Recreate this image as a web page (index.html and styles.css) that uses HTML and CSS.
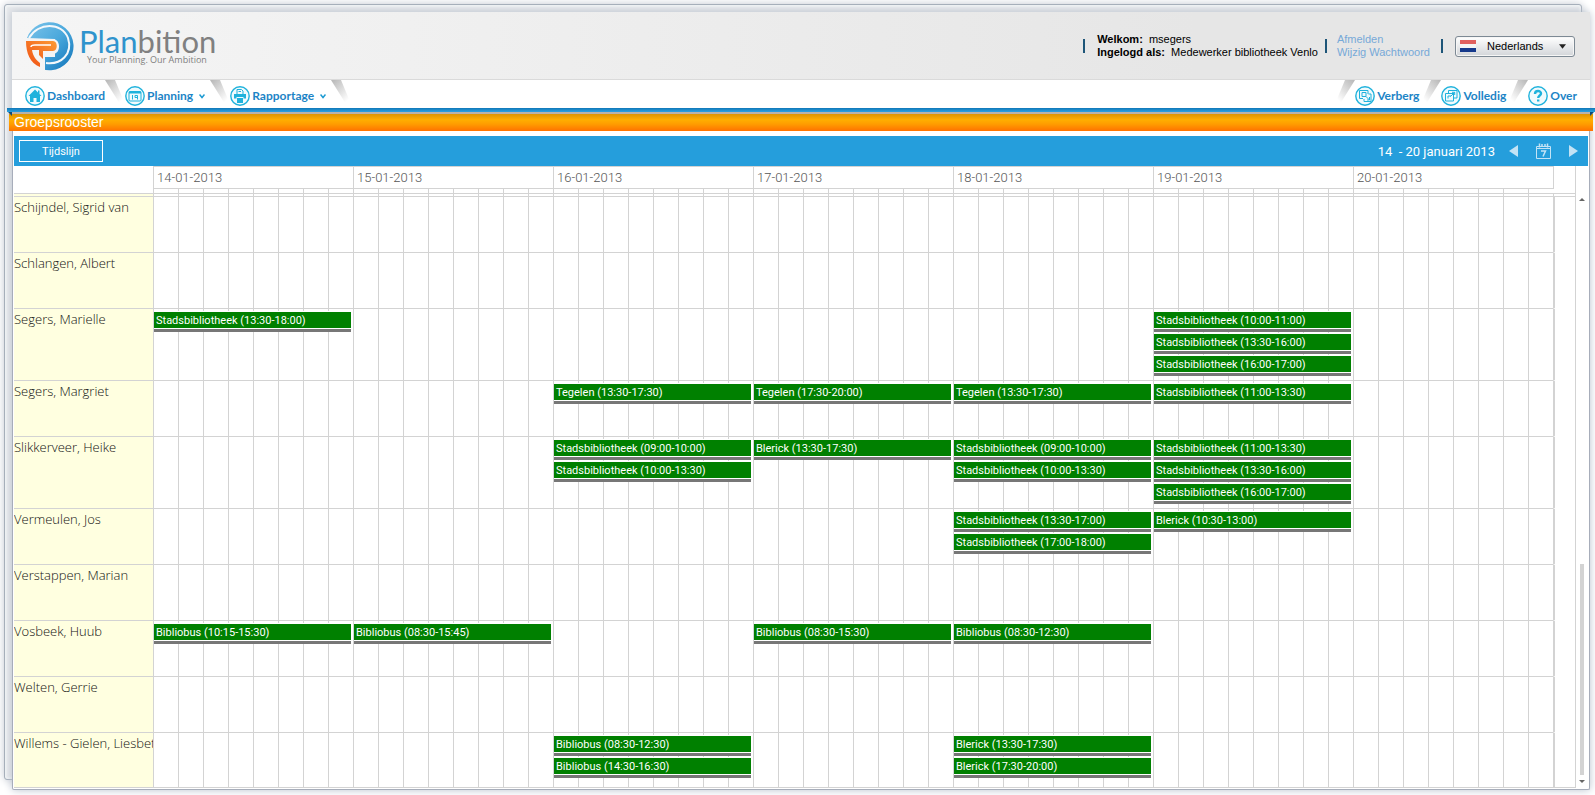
FILE: index.html
```html
<!DOCTYPE html>
<html lang="nl">
<head>
<meta charset="utf-8">
<title>Planbition - Groepsrooster</title>
<link rel="stylesheet" href="styles.css">
</head>
<body>
<div class="sheet">
  <header class="header">
    <div class="logo">
      <svg class="logo-mark" viewBox="0 0 50 50" aria-hidden="true">
        <defs>
          <linearGradient id="lb" x1="0" y1="0" x2="1" y2="1"><stop offset="0" stop-color="#7cc4ea"/><stop offset=".5" stop-color="#4aa8dc"/><stop offset="1" stop-color="#0f72b8"/></linearGradient>
          <linearGradient id="lo" x1="0" y1="1" x2="1" y2="0"><stop offset="0" stop-color="#f04f14"/><stop offset="1" stop-color="#fb9a34"/></linearGradient>
        </defs>
        <path d="M2 17 A24 24 0 1 1 17 48 V36 H30 V18 Z" fill="url(#lb)"/>
        <path d="M4 17 C13 1 37 1 43 17 C48 33 36 44 21 42" fill="none" stroke="#f4f8fb" stroke-width="2"/>
        <path d="M0 18 H28 C36 18 36 33 28 33 H20 V49 H17 V22 H0Z" fill="#f4f4f4"/>
        <path d="M1 20 H28 C33 20 33 30 28 30 H18 V38 L14 34 V29 H7 C8 35 11 39 15 42 V46 C5 42 1 32 1 20 Z" fill="url(#lo)"/>
        <path d="M6 26 C6 24 8 24 10 24 H26" fill="none" stroke="#fff" stroke-width="1.500"/>
      </svg>
      <div class="logo-words">
        <div class="logo-name"><span class="logo-blue">Plan</span>bition</div>
        <div class="logo-tag">Your Planning. Our Ambition</div>
      </div>
    </div>
    <div class="user">
      <i class="bar"></i>
      <div class="who"><div><b>Welkom:</b>&nbsp; msegers</div><div><b>Ingelogd als:</b>&nbsp; Medewerker bibliotheek Venlo</div></div>
      <i class="bar"></i>
      <div class="links"><a href="#">Afmelden</a><a href="#">Wijzig Wachtwoord</a></div>
      <i class="bar"></i>
      <div class="lang">
        <select aria-label="Taal"><option>Nederlands</option></select>
        <svg class="flag" viewBox="0 0 16 12" aria-hidden="true"><path d="M0 0h16v4H0z" fill="#e0605f"/><path d="M0 4h16v4H0z" fill="#f4f4f4"/><path d="M0 8h16v4H0z" fill="#15398b"/></svg>
        <svg class="caret" viewBox="0 0 8 5" aria-hidden="true"><path d="M0 0h8L4 5z" fill="#222"/></svg>
      </div>
    </div>
  </header>

  <nav class="nav">
    <svg width="0" height="0" class="defs" aria-hidden="true"><defs><linearGradient id="sh" gradientUnits="userSpaceOnUse" x1="1" y1="0" x2="19" y2="18"><stop offset="0" stop-color="#b8b8b8"/><stop offset="1" stop-color="#fff"/></linearGradient></defs></svg>
    <div class="tabs">
      <a class="tab" href="#">
        <svg class="icon" viewBox="0 0 20 20"><circle cx="10" cy="10" r="9.200"/><path class="fill" d="M10 3.500 3.500 10H5v6h3.500v-4h3v4H15v-6h1.500L14.500 8V4.500H13v2z"/></svg>Dashboard</a>
      <svg class="edge" viewBox="0 0 20 25"><path d="M0 0H10L20 24H15Z" fill="url(#sh)"/></svg>
      <a class="tab" href="#">
        <svg class="icon" viewBox="0 0 20 20"><circle cx="10" cy="10" r="9.200"/><rect x="4" y="5.500" width="12" height="9.500" rx="1"/><path d="M4 6.500h12" stroke-width="2"/><path d="M7.500 9v4.500M12.500 13.500v-4H10v2h2.500"/></svg>Planning<svg class="chev" viewBox="0 0 6 5"><path d="M.5 .5 3 3.500 5.500 .5"/></svg></a>
      <svg class="edge" viewBox="0 0 20 25"><path d="M0 0H10L20 24H15Z" fill="url(#sh)"/></svg>
      <a class="tab" href="#">
        <svg class="icon" viewBox="0 0 20 20"><circle cx="10" cy="10" r="9.200"/><path d="M7 8V3.500h4.500L13 5v3M8.500 5.500h2.500"/><path class="fill" d="M4 8h12v4.500h-2.500v-1.500h-7v1.500H4z"/><path class="fill" d="M7 12h6v5H7z"/></svg>Rapportage<svg class="chev" viewBox="0 0 6 5"><path d="M.5 .5 3 3.500 5.500 .5"/></svg></a>
      <svg class="edge" viewBox="0 0 20 25"><path d="M0 0H10L20 24H15Z" fill="url(#sh)"/></svg>
    </div>
    <div class="tabs tabs-right">
      <svg class="edge flip" viewBox="0 0 20 25"><path d="M0 0H10L20 24H15Z" fill="url(#sh)"/></svg>
      <a class="tab" href="#">
        <svg class="icon" viewBox="0 0 20 20"><circle cx="10" cy="10" r="9.200"/><path d="M8 12.500H4.500v-8h8.500V8M7 6.500h4v4H7zM11 10.500l3.500 3.500M14.500 11v3H12M13.500 8H16v7.500H9V13"/></svg>Verberg</a>
      <svg class="edge flip" viewBox="0 0 20 25"><path d="M0 0H10L20 24H15Z" fill="url(#sh)"/></svg>
      <a class="tab" href="#">
        <svg class="icon" viewBox="0 0 20 20"><circle cx="10" cy="10" r="9.200"/><path d="M7.500 7V4.500H16V12h-3M4.500 7.500h8V15h-8zM7 12.500V10h3M9.500 10.500l4-4M11 6.300h2.700V9"/></svg>Volledig</a>
      <svg class="edge flip" viewBox="0 0 20 25"><path d="M0 0H10L20 24H15Z" fill="url(#sh)"/></svg>
      <a class="tab" href="#">
        <svg class="icon" viewBox="0 0 20 20"><circle cx="10" cy="10" r="9.200"/><path class="q" d="M7 8C7 4 13 4.200 13 7.500 13 9.500 10.200 9.500 10.200 12M10.200 13.500v2"/></svg>Over</a>
    </div>
  </nav>
  <div class="ribbon"></div>
  <h1 class="title">Groepsrooster</h1>

  <main class="main">
    <div class="toolbar">
      <button class="timeline" type="button">Tijdslijn</button>
      <div class="period">
        <span class="range">14 &nbsp;- 20 januari 2013</span>
        <button type="button" aria-label="Vorige week"><svg width="9" height="12" viewBox="0 0 9 12"><path d="M9 0v12L0 6z" fill="#c3e3f5"/></svg></button>
        <button type="button" aria-label="Kalender"><svg width="15" height="16" viewBox="0 0 15 16" fill="none" stroke="#c3e3f5"><path d="M.5 3.500h14v12H.5zM.5 5.500h14" /><path d="M3.500 .5v4M6 1v3M9 1v3M11.500 .5v4M5 8h4.500L7 13.500" stroke-width="1.500"/></svg></button>
        <button type="button" aria-label="Volgende week"><svg width="9" height="12" viewBox="0 0 9 12"><path d="M0 0v12l9-6z" fill="#c3e3f5"/></svg></button>
      </div>
    </div>
    <div class="board">
      <table class="roster">
        <colgroup><col class="c-name"><col><col><col><col><col><col><col><col class="c-end"></colgroup>
        <thead>
          <tr class="dates"><td></td><th scope="col">14-01-2013</th><th scope="col">15-01-2013</th><th scope="col">16-01-2013</th><th scope="col">17-01-2013</th><th scope="col">18-01-2013</th><th scope="col">19-01-2013</th><th scope="col">20-01-2013</th><td class="end"></td></tr>
          <tr class="ticks"><td></td><td class="d"></td><td class="d"></td><td class="d"></td><td class="d"></td><td class="d"></td><td class="d"></td><td class="d"></td><td></td></tr>
          <tr class="gap"><td class="n"></td><td class="d"></td><td class="d"></td><td class="d"></td><td class="d"></td><td class="d"></td><td class="d"></td><td class="d"></td><td class="end"></td></tr>
        </thead>
        <tbody>
          <tr><th scope="row">Schijndel, Sigrid van</th><td class="d"></td><td class="d"></td><td class="d"></td><td class="d"></td><td class="d"></td><td class="d"></td><td class="d"></td><td class="end"></td></tr>
          <tr><th scope="row">Schlangen, Albert</th><td class="d"></td><td class="d"></td><td class="d"></td><td class="d"></td><td class="d"></td><td class="d"></td><td class="d"></td><td class="end"></td></tr>
          <tr><th scope="row">Segers, Marielle</th><td class="d"><div class="ev">Stadsbibliotheek (13:30-18:00)</div></td><td class="d"></td><td class="d"></td><td class="d"></td><td class="d"></td><td class="d"><div class="ev">Stadsbibliotheek (10:00-11:00)</div><div class="ev">Stadsbibliotheek (13:30-16:00)</div><div class="ev">Stadsbibliotheek (16:00-17:00)</div></td><td class="d"></td><td class="end"></td></tr>
          <tr><th scope="row">Segers, Margriet</th><td class="d"></td><td class="d"></td><td class="d"><div class="ev">Tegelen (13:30-17:30)</div></td><td class="d"><div class="ev">Tegelen (17:30-20:00)</div></td><td class="d"><div class="ev">Tegelen (13:30-17:30)</div></td><td class="d"><div class="ev">Stadsbibliotheek (11:00-13:30)</div></td><td class="d"></td><td class="end"></td></tr>
          <tr><th scope="row">Slikkerveer, Heike</th><td class="d"></td><td class="d"></td><td class="d"><div class="ev">Stadsbibliotheek (09:00-10:00)</div><div class="ev">Stadsbibliotheek (10:00-13:30)</div></td><td class="d"><div class="ev">Blerick (13:30-17:30)</div></td><td class="d"><div class="ev">Stadsbibliotheek (09:00-10:00)</div><div class="ev">Stadsbibliotheek (10:00-13:30)</div></td><td class="d"><div class="ev">Stadsbibliotheek (11:00-13:30)</div><div class="ev">Stadsbibliotheek (13:30-16:00)</div><div class="ev">Stadsbibliotheek (16:00-17:00)</div></td><td class="d"></td><td class="end"></td></tr>
          <tr><th scope="row">Vermeulen, Jos</th><td class="d"></td><td class="d"></td><td class="d"></td><td class="d"></td><td class="d"><div class="ev">Stadsbibliotheek (13:30-17:00)</div><div class="ev">Stadsbibliotheek (17:00-18:00)</div></td><td class="d"><div class="ev">Blerick (10:30-13:00)</div></td><td class="d"></td><td class="end"></td></tr>
          <tr><th scope="row">Verstappen, Marian</th><td class="d"></td><td class="d"></td><td class="d"></td><td class="d"></td><td class="d"></td><td class="d"></td><td class="d"></td><td class="end"></td></tr>
          <tr><th scope="row">Vosbeek, Huub</th><td class="d"><div class="ev">Bibliobus (10:15-15:30)</div></td><td class="d"><div class="ev">Bibliobus (08:30-15:45)</div></td><td class="d"></td><td class="d"><div class="ev">Bibliobus (08:30-15:30)</div></td><td class="d"><div class="ev">Bibliobus (08:30-12:30)</div></td><td class="d"></td><td class="d"></td><td class="end"></td></tr>
          <tr><th scope="row">Welten, Gerrie</th><td class="d"></td><td class="d"></td><td class="d"></td><td class="d"></td><td class="d"></td><td class="d"></td><td class="d"></td><td class="end"></td></tr>
          <tr class="last"><th scope="row">Willems - Gielen, Liesbeth</th><td class="d"></td><td class="d"></td><td class="d"><div class="ev">Bibliobus (08:30-12:30)</div><div class="ev">Bibliobus (14:30-16:30)</div></td><td class="d"></td><td class="d"><div class="ev">Blerick (13:30-17:30)</div><div class="ev">Blerick (17:30-20:00)</div></td><td class="d"></td><td class="d"></td><td class="end"></td></tr>
        </tbody>
      </table>
      <div class="scroll" aria-hidden="true">
        <svg width="6" height="3" viewBox="0 0 6 3"><path d="M3 0 6 3H0z" fill="#666"/></svg>
        <div class="track"><div class="thumb"></div></div>
        <svg width="6" height="3" viewBox="0 0 6 3"><path d="M3 3 6 0H0z" fill="#666"/></svg>
      </div>
    </div>
  </main>
</div>
</body>
</html>
```

FILE: styles.css
```css
* { box-sizing: border-box; }
body { margin: 0; background: #fff; font-family: "Liberation Sans", Arial, sans-serif; font-size: 11px; color: #000; overflow: hidden; }
a { text-decoration: none; }
button { font: inherit; color: inherit; background: none; border: 0; padding: 0; display: flex; align-items: center; justify-content: center; }

.sheet { position: relative; margin: 12px 5px 5px 12px; border: 1px solid #a7adba; border-top: 0; border-radius: 2px; background: #fff; box-shadow: 0 0 8px #b9c1cc; }
.sheet::before { content: ""; position: absolute; z-index: -1; inset: -8px 7px 9px -9px; border: 1px solid #a5afba; border-radius: 3px; background: #e6e8eb; box-shadow: 0 0 8px #c3c9d2, inset 0 0 2px 2px #f2f4f6; }

.header { display: flex; justify-content: space-between; height: 68px; margin: 0 -1px; padding: 9px 15px 0 13px; background: linear-gradient(90deg, #f5f5f5, #e6e6e6 75%); border-bottom: 1px solid #dadada; }
.logo { display: flex; gap: 4px; }
.logo-mark { width: 50px; height: 50px; }
.logo-words { padding-top: 3px; }
.logo-name { font: 400 31px/34px Lato, sans-serif; color: #808080; }
.logo-blue { color: #2f93cd; }
.logo-tag { padding-left: 8px; font: 9px/10px "Open Sans", sans-serif; color: #808080; margin-top: -3px; }

.user { display: flex; align-items: center; height: 50px; line-height: 13px; }
.bar { width: 2px; height: 14px; background: #1d5578; }
.who { padding: 0 7px 0 12px; }
.links { display: grid; padding: 0 11px 0 10px; }
.links a { color: #76a9d8; }
.lang { position: relative; margin-left: 12px; }
.lang select { appearance: none; width: 120px; height: 21px; padding: 0 0 0 31px; font: 11px/18px "Liberation Sans", Arial, sans-serif; color: #000; border: 1px solid #7d8994; border-radius: 3px; background: linear-gradient(#fff, #d2d5d9); box-shadow: inset 0 0 0 1px #f6f6f6; }
.flag { position: absolute; left: 5px; top: 4px; width: 16px; height: 12px; }
.caret { position: absolute; right: 9px; top: 8px; width: 7px; height: 5px; }

.nav { display: flex; justify-content: space-between; height: 28px; margin: 0 -1px; padding: 0 13px; background: #fff; }
.defs { position: absolute; }
.tabs { display: flex; }
.tab { display: flex; align-items: center; gap: 2px; padding-top: 4px; color: #1c84c6; font: 700 12px/20px Lato, sans-serif; }
.icon { width: 20px; height: 20px; fill: none; stroke: #1fb2dc; stroke-width: 1; }
.icon circle { fill: #f0fafd; stroke-width: 1.4; }
.icon .fill { fill: #1fb2dc; stroke: none; }
.icon .q { stroke-width: 2.4; }
.chev { width: 6px; height: 5px; margin: 0 5px 0 4px; fill: none; stroke: #1c9ad2; stroke-width: 1.5; }
.edge { width: 20px; height: 25px; }
.flip { transform: scaleX(-1); }
.tabs-right .tab { padding-right: 2px; }
.tabs-right .tab:last-child { padding-right: 0; }

.ribbon { position: relative; height: 4px; margin: 0 -6px; background: linear-gradient(#1077b8, #2aa1df); }
.ribbon::before, .ribbon::after { content: ""; position: absolute; top: 4px; border: 2px solid transparent; border-top-color: #0d4c78; }
.ribbon::before { left: 1px; border-right-color: #0d4c78; }
.ribbon::after { right: 1px; border-left-color: #0d4c78; }
.title { margin: 0 -4px; padding: 0 5px; border-top: 2px solid #b9b2a8; font-size: 14px; font-weight: 400; line-height: 17px; color: #fff; background: linear-gradient(#dc9400, #ffae00 35%, #ff9c00 60%, #ff7200); }

.main { padding: 5px 1px 1px; font-family: "Open Sans", sans-serif; }
.toolbar { display: flex; align-items: center; justify-content: space-between; height: 30px; padding: 0 10px 0 5px; background: #259edc; color: #fff; }
.timeline { width: 84px; height: 22px; border: 1px solid #fff; font-family: Roboto, sans-serif; }
.period { display: flex; align-items: center; font-size: 13px; }
.range { font-family: Roboto, sans-serif; }
.period button { margin-left: 18px; }
.period .range + button { margin-left: 14px; }

.board { display: flex; }
.roster { flex: 1; min-width: 0; width: 100%; table-layout: fixed; border-collapse: separate; border-spacing: 0; border-right: 1px solid #d3d3d3; border-bottom: 1px solid #d3d3d3; }
.c-name { width: 139px; }
.c-end { width: 22px; }
.roster td, .roster th { padding: 0; vertical-align: top; text-align: left; font-weight: 300; }
.dates { color: #555; font-family: Roboto, sans-serif; font-size: 13px; line-height: 21px; }
.roster .dates th { border: solid #d3d3d3; border-width: 1px 0 1px 1px; padding-left: 3px; }
.roster .end { border-left: 1px solid #d3d3d3; }
.ticks td { height: 4px; }
.d { background: linear-gradient(90deg, #d3d3d3 1px, transparent 1px) 0 0 / 12.5% 100%; }
.gap td { height: 3px; border-top: 1px solid #d3d3d3; }
.roster .gap .n, .roster tbody th { background: #ffffe0; }
.roster tbody th { font-size: 13px; line-height: 20px; color: #111; white-space: nowrap; overflow: hidden; }
.roster tbody td, .roster tbody th { height: 56px; border-top: 1px solid #d3d3d3; }
.roster tbody .last td, .roster tbody .last th { height: 55px; }
.roster tbody .d { padding: 2px 2px 3px 1px; }
.roster tbody .end { border-top-color: transparent; border-left-width: 2px; }
.roster tbody tr:first-child .end { border-top-color: #d3d3d3; }
.ev { height: 21px; margin-bottom: 1px; padding-left: 2px; border-top: 1px solid #fff; border-bottom: 3px solid #777; font-family: Roboto, sans-serif; font-size: 11px; font-weight: 400; line-height: 17px; color: #fff; background: linear-gradient(#008000 16px, #fff 16px); white-space: nowrap; overflow: hidden; }

.scroll { display: flex; flex-direction: column; align-items: center; width: 12px; padding: 32px 0 5px; }
.track { flex: 1; display: flex; flex-direction: column; justify-content: flex-end; padding: 5px 0; }
.thumb { width: 4px; height: 37%; background: #d3d3d3; }
```
